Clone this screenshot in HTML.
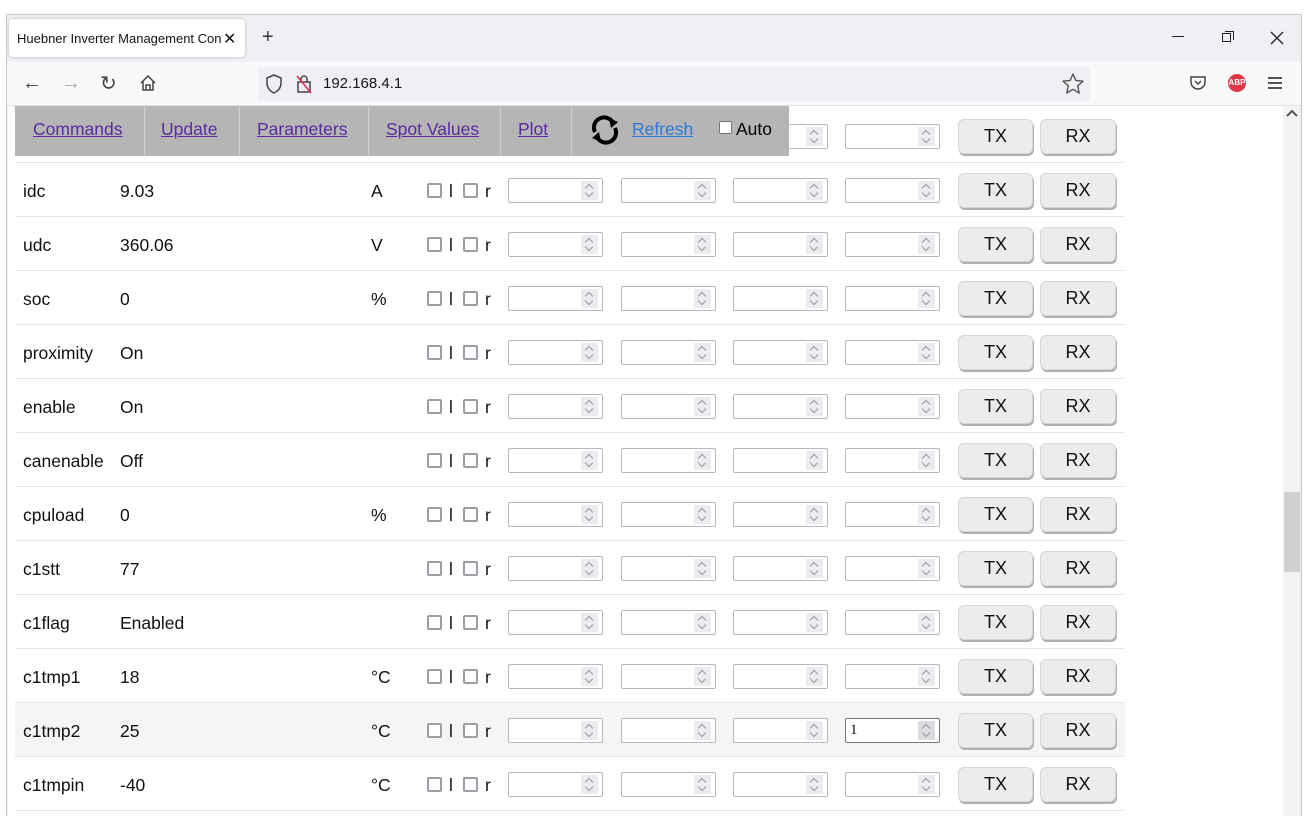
<!DOCTYPE html>
<html><head><meta charset="utf-8"><style>
*{box-sizing:border-box;margin:0;padding:0}
body{width:1308px;height:816px;overflow:hidden;background:#fff;font-family:"Liberation Sans",Arial,sans-serif;position:relative}
.abs{position:absolute}
.win{left:6px;top:14px;width:1296px;height:802px;border:1px solid #c8c8c8;border-bottom:none;background:#f0f0f4}
.tabbar{left:7px;top:15px;width:1294px;height:47px;background:#f0f0f4}
.tab{left:9px;top:19px;width:236px;height:38px;background:#fff;border-radius:4px;box-shadow:0 0 3px rgba(0,0,0,.25);font-size:13px;color:#15141a;padding:12px 0 0 8px;white-space:nowrap;overflow:hidden}
.toolbar{left:7px;top:62px;width:1294px;height:44px;background:#f9f9fb;border-bottom:1px solid #e0e0e6}
.url{left:258px;top:67px;width:832px;height:34px;background:#f0f0f4;border-radius:4px}
.content{left:8px;top:106px;width:1275px;height:710px;background:#fff;overflow:hidden}
.sb{left:1283px;top:106px;width:17px;height:710px;background:#f2f2f2}
.row{position:absolute;left:7px;width:1110px;height:54px;border-bottom:1px solid #e6e6e6;font-size:17.5px;color:#111}
.row span{position:absolute;top:18px}
.cb{position:absolute;top:20px;width:15px;height:15px;border:2px solid #9d9da6;border-radius:2px;background:#fff}
.inp{position:absolute;top:15px;width:95px;height:25px;border:1px solid #b7b7bd;border-radius:2px;background:#fff}
.inp i{position:absolute;right:4px;top:2px;width:17px;height:19px;background:#ececf0}
.inp i:before,.inp i:after{content:"";position:absolute;left:5px;width:5px;height:5px;border-left:1px solid #999;border-top:1px solid #999}
.inp i:before{top:4px;transform:rotate(45deg)}
.inp i:after{top:9px;transform:rotate(225deg)}
.btn{position:absolute;top:10px;height:35px;background:#ececec;border:1px solid #d6d6d6;border-radius:6px;box-shadow:1px 2px 0 #b0b0b0;text-align:center;font-size:18px;line-height:33px}
.menu{left:15px;top:106px;width:774px;height:50px;background:#b5b5b5;font-size:17.5px}
.menu a{position:absolute;top:13px;color:#5a2aa0;text-decoration:underline}
.sep{position:absolute;top:0;width:1px;height:50px;background:#d0d0d0}
</style></head><body>
<div class="abs win"></div>
<div class="abs tabbar"></div>
<div class="abs tab">Huebner Inverter Management Con<span style="position:absolute;left:214px;top:10px;font-size:16px">✕</span></div>
<div class="abs" style="left:262px;top:26px;font-size:20px;color:#333">+</div>
<div class="abs" style="left:1172px;top:36px;width:12px;height:1px;background:#222"></div>
<div class="abs" style="left:1222px;top:33px;width:9px;height:9px;border:1px solid #222"></div>
<div class="abs" style="left:1225px;top:31px;width:9px;height:9px;border-top:1px solid #222;border-right:1px solid #222"></div>
<svg class="abs" style="left:1270px;top:31px" width="14" height="14" viewBox="0 0 14 14"><path d="M1 1L13 13M13 1L1 13" stroke="#222" stroke-width="1.3"/></svg>
<div class="abs toolbar"></div>
<div class="abs url"></div>
<div class="abs" style="left:22px;top:72px;font-size:20px;color:#444">←</div>
<div class="abs" style="left:61px;top:72px;font-size:20px;color:#aaa">→</div>
<div class="abs" style="left:100px;top:71px;font-size:20px;color:#444">↻</div>
<svg class="abs" style="left:139px;top:74px" width="18" height="18" viewBox="0 0 18 18"><path d="M2 9L9 2L16 9M4 7V16H14V7M7 16V11H11V16" fill="none" stroke="#444" stroke-width="1.5"/></svg>
<svg class="abs" style="left:265px;top:74px" width="18" height="20" viewBox="0 0 18 20"><path d="M9 1L2 4V9C2 14 5 17 9 19C13 17 16 14 16 9V4Z" fill="none" stroke="#444" stroke-width="1.5"/></svg>
<svg class="abs" style="left:296px;top:74px" width="16" height="20" viewBox="0 0 16 20"><rect x="2" y="8" width="12" height="10" fill="none" stroke="#444" stroke-width="1.5"/><path d="M5 8V5a3 3 0 0 1 6 0V8" fill="none" stroke="#444" stroke-width="1.5"/><path d="M1 2L15 19" stroke="#e22850" stroke-width="1.5"/></svg>
<div class="abs" style="left:323px;top:75px;font-size:15px;color:#15141a">192.168.4.1</div>
<svg class="abs" style="left:1062px;top:73px" width="22" height="21" viewBox="0 0 22 21"><path d="M11 1L13.9 7.5L21 8.2L15.6 12.9L17.2 20L11 16.3L4.8 20L6.4 12.9L1 8.2L8.1 7.5Z" fill="none" stroke="#555" stroke-width="1.4" stroke-linejoin="round"/></svg>
<svg class="abs" style="left:1189px;top:75px" width="18" height="16" viewBox="0 0 18 16"><path d="M2 2H16V7A7 7 0 0 1 2 7Z" fill="none" stroke="#444" stroke-width="1.5"/><path d="M6 6L9 9L12 6" fill="none" stroke="#444" stroke-width="1.5"/></svg>
<div class="abs" style="left:1228px;top:74px;width:18px;height:18px;border-radius:50%;background:#e0384a;color:#fff;font-size:8px;font-weight:bold;text-align:center;line-height:18px">ABP</div>
<div class="abs" style="left:1268px;top:77px;width:14px;height:2px;background:#555;box-shadow:0 5px 0 #555,0 10px 0 #555"></div>
<div class="abs content"></div>
<div class="abs sb"></div>
<div class="abs" style="left:1284px;top:492px;width:16px;height:80px;background:#d0d0d0"></div>
<svg class="abs" style="left:1286px;top:110px" width="12" height="8" viewBox="0 0 12 8"><path d="M1 6L6 1L11 6" fill="none" stroke="#555" stroke-width="2"/></svg>
<div class="abs" style="left:1301px;top:106px;width:1px;height:710px;background:#c8c8c8"></div>

<div class="row" style="top:109px;left:15px"><div class="inp" style="left:718px"><i></i></div><div class="inp" style="left:830px"><i></i></div><div class="btn" style="left:943px;width:75px">TX</div><div class="btn" style="left:1025px;width:76px">RX</div></div>

<div class="row" style="top:163px;left:15px"><span style="left:8px">idc</span><span style="left:105px">9.03</span><span style="left:356px">A</span><div class="cb" style="left:412px"></div><span style="left:434px">l</span><div class="cb" style="left:448px"></div><span style="left:470px">r</span><div class="inp" style="left:493px"><i></i></div><div class="inp" style="left:606px"><i></i></div><div class="inp" style="left:718px"><i></i></div><div class="inp" style="left:830px"><i></i></div><div class="btn" style="left:943px;width:75px">TX</div><div class="btn" style="left:1025px;width:76px">RX</div></div>
<div class="row" style="top:217px;left:15px"><span style="left:8px">udc</span><span style="left:105px">360.06</span><span style="left:356px">V</span><div class="cb" style="left:412px"></div><span style="left:434px">l</span><div class="cb" style="left:448px"></div><span style="left:470px">r</span><div class="inp" style="left:493px"><i></i></div><div class="inp" style="left:606px"><i></i></div><div class="inp" style="left:718px"><i></i></div><div class="inp" style="left:830px"><i></i></div><div class="btn" style="left:943px;width:75px">TX</div><div class="btn" style="left:1025px;width:76px">RX</div></div>
<div class="row" style="top:271px;left:15px"><span style="left:8px">soc</span><span style="left:105px">0</span><span style="left:356px">%</span><div class="cb" style="left:412px"></div><span style="left:434px">l</span><div class="cb" style="left:448px"></div><span style="left:470px">r</span><div class="inp" style="left:493px"><i></i></div><div class="inp" style="left:606px"><i></i></div><div class="inp" style="left:718px"><i></i></div><div class="inp" style="left:830px"><i></i></div><div class="btn" style="left:943px;width:75px">TX</div><div class="btn" style="left:1025px;width:76px">RX</div></div>
<div class="row" style="top:325px;left:15px"><span style="left:8px">proximity</span><span style="left:105px">On</span><div class="cb" style="left:412px"></div><span style="left:434px">l</span><div class="cb" style="left:448px"></div><span style="left:470px">r</span><div class="inp" style="left:493px"><i></i></div><div class="inp" style="left:606px"><i></i></div><div class="inp" style="left:718px"><i></i></div><div class="inp" style="left:830px"><i></i></div><div class="btn" style="left:943px;width:75px">TX</div><div class="btn" style="left:1025px;width:76px">RX</div></div>
<div class="row" style="top:379px;left:15px"><span style="left:8px">enable</span><span style="left:105px">On</span><div class="cb" style="left:412px"></div><span style="left:434px">l</span><div class="cb" style="left:448px"></div><span style="left:470px">r</span><div class="inp" style="left:493px"><i></i></div><div class="inp" style="left:606px"><i></i></div><div class="inp" style="left:718px"><i></i></div><div class="inp" style="left:830px"><i></i></div><div class="btn" style="left:943px;width:75px">TX</div><div class="btn" style="left:1025px;width:76px">RX</div></div>
<div class="row" style="top:433px;left:15px"><span style="left:8px">canenable</span><span style="left:105px">Off</span><div class="cb" style="left:412px"></div><span style="left:434px">l</span><div class="cb" style="left:448px"></div><span style="left:470px">r</span><div class="inp" style="left:493px"><i></i></div><div class="inp" style="left:606px"><i></i></div><div class="inp" style="left:718px"><i></i></div><div class="inp" style="left:830px"><i></i></div><div class="btn" style="left:943px;width:75px">TX</div><div class="btn" style="left:1025px;width:76px">RX</div></div>
<div class="row" style="top:487px;left:15px"><span style="left:8px">cpuload</span><span style="left:105px">0</span><span style="left:356px">%</span><div class="cb" style="left:412px"></div><span style="left:434px">l</span><div class="cb" style="left:448px"></div><span style="left:470px">r</span><div class="inp" style="left:493px"><i></i></div><div class="inp" style="left:606px"><i></i></div><div class="inp" style="left:718px"><i></i></div><div class="inp" style="left:830px"><i></i></div><div class="btn" style="left:943px;width:75px">TX</div><div class="btn" style="left:1025px;width:76px">RX</div></div>
<div class="row" style="top:541px;left:15px"><span style="left:8px">c1stt</span><span style="left:105px">77</span><div class="cb" style="left:412px"></div><span style="left:434px">l</span><div class="cb" style="left:448px"></div><span style="left:470px">r</span><div class="inp" style="left:493px"><i></i></div><div class="inp" style="left:606px"><i></i></div><div class="inp" style="left:718px"><i></i></div><div class="inp" style="left:830px"><i></i></div><div class="btn" style="left:943px;width:75px">TX</div><div class="btn" style="left:1025px;width:76px">RX</div></div>
<div class="row" style="top:595px;left:15px"><span style="left:8px">c1flag</span><span style="left:105px">Enabled</span><div class="cb" style="left:412px"></div><span style="left:434px">l</span><div class="cb" style="left:448px"></div><span style="left:470px">r</span><div class="inp" style="left:493px"><i></i></div><div class="inp" style="left:606px"><i></i></div><div class="inp" style="left:718px"><i></i></div><div class="inp" style="left:830px"><i></i></div><div class="btn" style="left:943px;width:75px">TX</div><div class="btn" style="left:1025px;width:76px">RX</div></div>
<div class="row" style="top:649px;left:15px"><span style="left:8px">c1tmp1</span><span style="left:105px">18</span><span style="left:356px">°C</span><div class="cb" style="left:412px"></div><span style="left:434px">l</span><div class="cb" style="left:448px"></div><span style="left:470px">r</span><div class="inp" style="left:493px"><i></i></div><div class="inp" style="left:606px"><i></i></div><div class="inp" style="left:718px"><i></i></div><div class="inp" style="left:830px"><i></i></div><div class="btn" style="left:943px;width:75px">TX</div><div class="btn" style="left:1025px;width:76px">RX</div></div>
<div class="row" style="top:703px;left:15px;background:#f5f5f5"><span style="left:8px">c1tmp2</span><span style="left:105px">25</span><span style="left:356px">°C</span><div class="cb" style="left:412px"></div><span style="left:434px">l</span><div class="cb" style="left:448px"></div><span style="left:470px">r</span><div class="inp" style="left:493px"><i></i></div><div class="inp" style="left:606px"><i></i></div><div class="inp" style="left:718px"><i></i></div><div class="inp" style="left:830px;border-color:#777"><span style="left:4px;top:3px;font-family:'Liberation Serif',serif;font-size:15px">1</span><i style="background:#dcdce0"></i></div><div class="btn" style="left:943px;width:75px">TX</div><div class="btn" style="left:1025px;width:76px">RX</div></div>
<div class="row" style="top:757px;left:15px"><span style="left:8px">c1tmpin</span><span style="left:105px">-40</span><span style="left:356px">°C</span><div class="cb" style="left:412px"></div><span style="left:434px">l</span><div class="cb" style="left:448px"></div><span style="left:470px">r</span><div class="inp" style="left:493px"><i></i></div><div class="inp" style="left:606px"><i></i></div><div class="inp" style="left:718px"><i></i></div><div class="inp" style="left:830px"><i></i></div><div class="btn" style="left:943px;width:75px">TX</div><div class="btn" style="left:1025px;width:76px">RX</div></div>

<div class="abs menu">
<a style="left:18px">Commands</a><div class="sep" style="left:129px"></div>
<a style="left:146px">Update</a><div class="sep" style="left:224px"></div>
<a style="left:242px">Parameters</a><div class="sep" style="left:353px"></div>
<a style="left:371px">Spot Values</a><div class="sep" style="left:485px"></div>
<a style="left:503px">Plot</a><div class="sep" style="left:556px"></div>
<svg style="position:absolute;left:574px;top:9px" width="32" height="30" viewBox="0 0 32 30"><path d="M6 17A10 10 0 0 1 24 8" fill="none" stroke="#000" stroke-width="4"/><path d="M20 3L29 7L22 13Z" fill="#000"/><path d="M26 13A10 10 0 0 1 8 22" fill="none" stroke="#000" stroke-width="4"/><path d="M12 27L3 23L10 17Z" fill="#000"/></svg>
<a style="left:617px;color:#2a7ad8">Refresh</a>
<div style="position:absolute;left:704px;top:15px;width:13px;height:13px;border:1px solid #777;background:#fff;border-radius:2px"></div>
<span style="position:absolute;left:721px;top:13px;color:#000">Auto</span>
</div>
</body></html>
